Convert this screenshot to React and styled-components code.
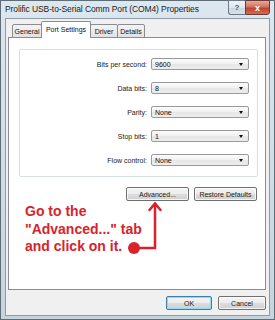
import React from "react";
import styled, { createGlobalStyle } from "styled-components";

const Global = createGlobalStyle`
  html, body { margin: 0; padding: 0; background: #c8d5de; }
  * { box-sizing: border-box; }
`;

const Frame = styled.div`
  width: 275px;
  height: 320px;
  border: 1px solid #5f6e76;
  background: linear-gradient(#dce7f0, #c6d4de);
  padding: 0 4px 3px;
  display: flex;
  flex-direction: column;
  font-family: "Liberation Sans", Arial, sans-serif;
`;

const TitleBar = styled.div`
  height: 17px;
  flex: none;
  display: flex;
  align-items: flex-start;
  justify-content: space-between;
`;

const TitleText = styled.div`
  font-size: 8.5px;
  color: #1c1c1c;
  padding-top: 3px;
  letter-spacing: -0.1px;
  white-space: nowrap;
`;

const Caption = styled.div`
  display: flex;
  margin-top: -1px;
`;

const HelpButton = styled.div`
  width: 17px;
  height: 15px;
  border: 1px solid #6d7b86;
  border-right: none;
  border-radius: 0 0 0 3px;
  background: linear-gradient(#eef3f7 0%, #dfe7ee 50%, #c9d5de 51%, #d6e0e8 100%);
  color: #4a5a68;
  font-size: 8px;
  font-weight: bold;
  display: flex;
  align-items: center;
  justify-content: center;
`;

const CloseButton = styled.div`
  width: 25px;
  height: 15px;
  border: 1px solid #6b3b36;
  border-radius: 0 0 3px 0;
  background: linear-gradient(#e7a898 0%, #d27562 45%, #c0432f 55%, #d46a52 100%);
  color: #fff;
  font-size: 9px;
  font-weight: bold;
  display: flex;
  align-items: center;
  justify-content: center;
`;

const Client = styled.div`
  flex: 1;
  border: 1px solid #8e9ca6;
  background: #f0f0f0;
  display: flex;
  flex-direction: column;
  padding: 0 3px 0 2px;
`;

const TabStrip = styled.div`
  height: 19px;
  flex: none;
  display: flex;
  align-items: flex-end;
  padding-left: 5px;
  margin-bottom: -1px;
  position: relative;
  z-index: 1;
`;

const Tab = styled.div`
  width: ${(p) => p.$w}px;
  height: ${(p) => (p.$active ? 17 : 14)}px;
  margin-left: -1px;
  border: 1px solid #898c95;
  border-bottom: ${(p) => (p.$active ? "none" : "1px solid #898c95")};
  border-radius: 2px 2px 0 0;
  background: ${(p) => (p.$active ? "#ffffff" : "linear-gradient(#f4f4f4, #e2e2e2)")};
  position: relative;
  z-index: ${(p) => (p.$active ? 2 : 1)};
  font-size: 7px;
  color: #111;
  display: flex;
  justify-content: center;
  align-items: center;
  padding-bottom: ${(p) => (p.$active ? 2 : 0)}px;
`;

const Panel = styled.div`
  flex: 1;
  background: #ffffff;
  border: 1px solid #898c95;
  padding: 11px 7px 0 10px;
  display: flex;
  flex-direction: column;
  position: relative;
`;

const Group = styled.div`
  border: 1px solid #d5dfe5;
  border-radius: 2px;
  padding: 8px 8px 10px 0;
  display: flex;
  flex-direction: column;
  gap: 12px;
`;

const Row = styled.div`
  height: 12px;
  display: flex;
  align-items: center;
`;

const Label = styled.div`
  flex: 1;
  text-align: right;
  padding-right: 4px;
  font-size: 7px;
  color: #1a1a1a;
  white-space: nowrap;
`;

const Combo = styled.div`
  width: 98px;
  height: 12px;
  border: 1px solid #9a9a9a;
  border-radius: 2px;
  background: linear-gradient(#fbfbfb 0%, #f1f1f1 50%, #e6e6e6 51%, #ededed 100%);
  display: flex;
  align-items: center;
  justify-content: space-between;
  padding: 0 5px 0 3px;
  font-size: 7px;
  color: #111;
`;

const Caret = styled.span`
  width: 0;
  height: 0;
  border-left: 2.5px solid transparent;
  border-right: 2.5px solid transparent;
  border-top: 3px solid #111;
`;

const ButtonRow = styled.div`
  display: flex;
  justify-content: flex-end;
  gap: 5px;
  margin-top: 10px;
  padding-right: 1px;
`;

const Button = styled.div`
  width: ${(p) => p.$w}px;
  height: 14px;
  border: 1px solid ${(p) => (p.$focus ? "#3c7fb1" : "#707070")};
  border-radius: 2px;
  background: linear-gradient(#f4f4f4 0%, #ececec 50%, #dddddd 51%, #d0d0d0 100%);
  box-shadow: inset 0 0 0 1px ${(p) => (p.$focus ? "#8fdaf3" : "rgba(255,255,255,0.75)")};
  font-size: 7px;
  color: #1a1a1a;
  display: flex;
  align-items: center;
  justify-content: center;
  white-space: nowrap;
`;

const Note = styled.div`
  margin-top: 2px;
  padding-left: 6px;
  font-size: 14px;
  font-weight: bold;
  line-height: 17.5px;
  color: #d8232c;
`;

const Arrow = styled.svg`
  position: absolute;
  left: 111px;
  top: 161px;
  overflow: visible;
`;

const Footer = styled.div`
  height: 25px;
  flex: none;
  display: flex;
  justify-content: flex-end;
  align-items: flex-start;
  gap: 6px;
  padding-top: 6px;
`;

const rows = [
  ["Bits per second:", "9600"],
  ["Data bits:", "8"],
  ["Parity:", "None"],
  ["Stop bits:", "1"],
  ["Flow control:", "None"],
];

export default function App() {
  return (
    <>
      <Global />
      <Frame>
        <TitleBar>
          <TitleText>Prolific USB-to-Serial Comm Port (COM4) Properties</TitleText>
          <Caption>
            <HelpButton>?</HelpButton>
            <CloseButton>x</CloseButton>
          </Caption>
        </TitleBar>
        <Client>
          <TabStrip>
            <Tab $w={30}>General</Tab>
            <Tab $w={50} $active>Port Settings</Tab>
            <Tab $w={28}>Driver</Tab>
            <Tab $w={28}>Details</Tab>
          </TabStrip>
          <Panel>
            <Group>
              {rows.map(([l, v]) => (
                <Row key={l}>
                  <Label>{l}</Label>
                  <Combo>
                    <span>{v}</span>
                    <Caret />
                  </Combo>
                </Row>
              ))}
            </Group>
            <ButtonRow>
              <Button $w={63}>Advanced...</Button>
              <Button $w={63}>Restore Defaults</Button>
            </ButtonRow>
            <Note>
              Go to the
              <br />
              "Advanced..." tab
              <br />
              and click on it.
            </Note>
            <Arrow width="45" height="56" viewBox="0 0 45 56">
              <polyline
                points="14,49 35,49 35,5"
                fill="none"
                stroke="#d8232c"
                strokeWidth="2.5"
              />
              <polyline
                points="29.5,11 35,4.5 40.5,11"
                fill="none"
                stroke="#d8232c"
                strokeWidth="2.5"
                strokeLinecap="round"
              />
              <circle cx="14" cy="49" r="6" fill="#d8232c" />
            </Arrow>
          </Panel>
          <Footer>
            <Button $w={46} $focus>OK</Button>
            <Button $w={48}>Cancel</Button>
          </Footer>
        </Client>
      </Frame>
    </>
  );
}
